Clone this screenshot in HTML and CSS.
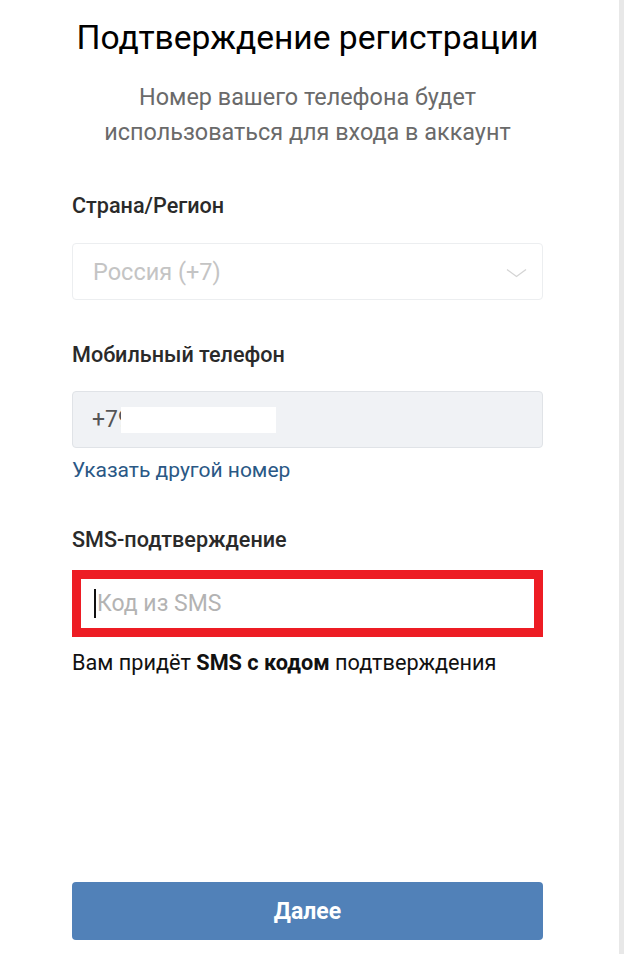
FILE: index.html
```html
<!DOCTYPE html>
<html lang="ru">
<head>
<meta charset="utf-8">
<title>Подтверждение регистрации</title>
<link rel="stylesheet" href="styles.css">
</head>
<body>
<div class="page">
  <main class="main">
    <h1 class="title">Подтверждение регистрации</h1>
    <p class="subtitle">Номер вашего телефона будет<br>использоваться для входа в аккаунт</p>

    <div class="field-label label-country">Страна/Регион</div>
    <div class="select">
      <span class="select-text">Россия (+7)</span>
      <svg class="chevron" width="21" height="10" viewBox="0 0 21 10"><polyline points="1,1.5 10.5,8.5 20,1.5" fill="none" stroke="#d4d4d4" stroke-width="1.3"/></svg>
    </div>

    <div class="field-label label-phone">Мобильный телефон</div>
    <div class="phone">
      <span class="phone-text">+79</span>
      <span class="redact"></span>
    </div>
    <a class="link" href="#">Указать другой номер</a>

    <div class="field-label label-sms">SMS-подтверждение</div>
    <div class="sms-box">
      <span class="caret"></span><span class="placeholder">Код из SMS</span>
    </div>
    <p class="hint">Вам придёт <b>SMS с кодом</b> подтверждения</p>

    <button class="btn">Далее</button>
  </main>
  <div class="gutter"></div>
</div>
</body>
</html>
```
FILE: styles.css
```css
html, body {
  margin: 0;
  padding: 0;
  background: #ffffff;
}
body {
  font-family: Roboto, "Noto Sans", sans-serif;
  color: #000;
}
.page {
  display: flex;
  height: 954px;
  width: 624px;
}
.main {
  flex: 1;
  display: flex;
  flex-direction: column;
  padding: 0 76px 14px 72px;
  background: #ffffff;
}
.gutter {
  width: 5px;
  background: #e8e8e8;
}
.title {
  margin: 18px 0 0;
  font-size: 33.6px;
  line-height: 40px;
  font-weight: 400;
  text-align: center;
  color: #000;
  white-space: nowrap;
}
.subtitle {
  margin: 22px 0 0;
  font-size: 23.4px;
  line-height: 35px;
  color: #6a6a6a;
  text-align: center;
  white-space: nowrap;
}
.field-label {
  font-size: 21.6px;
  line-height: 24px;
  font-weight: 500;
  color: #2a2a2a;
}
.label-country { margin-top: 44px; }
.label-phone { margin-top: 43px; }
.label-sms { margin-top: 46px; }
.select {
  margin-top: 25px;
  height: 57px;
  box-sizing: border-box;
  border: 1px solid #eceef0;
  border-radius: 4px;
  display: flex;
  align-items: center;
  justify-content: space-between;
  padding: 0 15px 0 20px;
}
.select-text {
  font-size: 23.5px;
  color: #c4c4c4;
}
.chevron {
  display: block;
  margin-top: 2px;
}
.phone {
  position: relative;
  margin-top: 24px;
  height: 57px;
  box-sizing: border-box;
  background: #f0f2f5;
  border: 1px solid #e0e3e7;
  border-radius: 4px;
  display: flex;
  align-items: center;
  padding: 0 19px;
}
.phone-text {
  font-size: 23px;
  color: #555;
}
.redact {
  position: absolute;
  left: 48px;
  top: 15px;
  width: 155px;
  height: 26px;
  background: #ffffff;
}
.link {
  margin-top: 10px;
  font-size: 21px;
  line-height: 24px;
  color: #2a5885;
  text-decoration: none;
}
.sms-box {
  margin-top: 18px;
  height: 67px;
  box-sizing: border-box;
  border: 9px solid #ed1c24;
  background: #fff;
  display: flex;
  align-items: center;
  padding: 0 13px;
}
.caret {
  display: block;
  width: 2px;
  height: 29px;
  background: #111;
  margin-right: 1px;
}
.placeholder {
  font-size: 23px;
  color: #b3b3b3;
}
.hint {
  margin: 14px 0 0;
  font-size: 21.7px;
  line-height: 24px;
  color: #111;
  white-space: nowrap;
}
.hint b {
  font-weight: 700;
}
.btn {
  margin-top: auto;
  height: 58px;
  border: none;
  border-radius: 4px;
  background: #5181b8;
  color: #fff;
  font-family: Roboto, "Noto Sans", sans-serif;
  font-size: 23px;
  font-weight: 700;
  cursor: pointer;
}
```
